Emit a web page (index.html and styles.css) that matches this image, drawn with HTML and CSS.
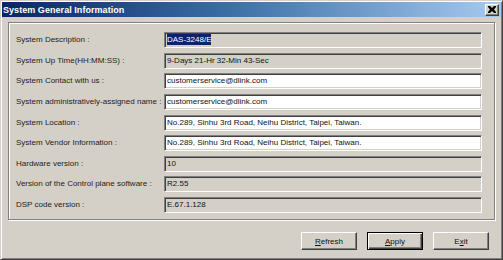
FILE: index.html
```html
<!DOCTYPE html>
<html>
<head>
<meta charset="utf-8">
<link rel="stylesheet" href="styles.css">
</head>
<body>
<div class="window">
  <div class="titlebar">
    <span class="title">System General Information</span>
    <span class="close"><svg width="8" height="7" viewBox="0 0 8 7"><path d="M0 0h2l2 2 2-2h2v1L6 3.5 8 6v1H6L4 5 2 7H0V6l2-2.5L0 1z" fill="#000"/></svg></span>
  </div>
  <div class="group">
    <div class="label">System Description :</div>
    <div class="field ro"><span class="sel">DAS-3248/E</span></div>
    <div class="label">System Up Time(HH:MM:SS) :</div>
    <div class="field ro">9-Days 21-Hr 32-Min 43-Sec</div>
    <div class="label">System Contact with us :</div>
    <div class="field">customerservice@dlink.com</div>
    <div class="label">System administratively-assigned name :</div>
    <div class="field">customerservice@dlink.com</div>
    <div class="label">System Location :</div>
    <div class="field">No.289, Sinhu 3rd Road, Neihu District, Taipei, Taiwan.</div>
    <div class="label">System Vendor Information :</div>
    <div class="field">No.289, Sinhu 3rd Road, Neihu District, Taipei, Taiwan.</div>
    <div class="label">Hardware version :</div>
    <div class="field ro">10</div>
    <div class="label">Version of the Control plane software :</div>
    <div class="field ro">R2.55</div>
    <div class="label">DSP code version :</div>
    <div class="field ro">E.67.1.128</div>
  </div>
  <div class="buttons">
    <div class="btn"><span><u>R</u>efresh</span></div>
    <div class="btn default"><span><u>A</u>pply</span></div>
    <div class="btn"><span>E<u>x</u>it</span></div>
  </div>
</div>
</body>
</html>
```
FILE: styles.css
```css
html, body {
  margin: 0;
  padding: 0;
  background: #d4d0c8;
}
.window {
  width: 503px;
  height: 260px;
  box-sizing: border-box;
  background: #d4d0c8;
  border: 1px solid;
  border-color: #d4d0c8 #404040 #404040 #d4d0c8;
  box-shadow: inset 1px 1px #ffffff, inset -1px -1px #808080;
  padding: 1px;
  font-family: "Liberation Sans", Arial, sans-serif;
  display: flex;
  flex-direction: column;
}
.titlebar {
  height: 15px;
  background: linear-gradient(to right, #0a246a 0%, #3a6ea5 45%, #a6caf0 100%);
  display: flex;
  align-items: center;
  justify-content: space-between;
  padding: 0 2px 0 1px;
}
.title {
  color: #fff;
  font-weight: bold;
  font-size: 9px;
  letter-spacing: 0.05px;
}
.close {
  width: 14px;
  height: 12px;
  box-sizing: border-box;
  background: #d4d0c8;
  border: 1px solid;
  border-color: #fff #404040 #404040 #fff;
  box-shadow: inset -1px -1px #808080;
  display: flex;
  align-items: center;
  justify-content: center;
  padding-right: 1px;
}
.close svg { display: block; }
.group {
  margin: 5px 6px 0 6px;
  height: 198px;
  box-sizing: border-box;
  border: 1px solid #808080;
  box-shadow: inset 1px 1px #fff, 1px 1px #fff;
  padding: 9px 10px 0 7px;
  display: grid;
  grid-template-columns: 148px 318px;
  grid-auto-rows: 16px;
  row-gap: 4.625px;
  align-items: center;
}
.label {
  font-size: 8px;
  color: #1c1c1c;
  white-space: nowrap;
  line-height: 16px;
}
.field {
  height: 16px;
  box-sizing: border-box;
  background: #fff;
  border: 1px solid;
  border-color: #808080 #fff #fff #808080;
  box-shadow: inset 1px 1px #404040, inset -1px -1px #d4d0c8;
  font-size: 8px;
  line-height: 14px;
  padding: 0 2px;
  white-space: nowrap;
  overflow: hidden;
  color: #111;
}
.field.ro {
  background: #d4d0c8;
}
.sel {
  background: #0a246a;
  color: #fff;
  padding: 1px 0;
}
.buttons {
  display: flex;
  justify-content: flex-end;
  gap: 10px;
  margin: 12px 12px 0 0;
}
.btn {
  width: 56px;
  height: 18px;
  box-sizing: border-box;
  border: 1px solid;
  border-color: #fff #404040 #404040 #fff;
  box-shadow: inset -1px -1px #808080;
  font-size: 8px;
  color: #111;
  display: flex;
  align-items: center;
  justify-content: center;
}
.btn.default {
  border: 1px solid #000;
  box-shadow: inset 1px 1px #fff, inset -1px -1px #404040, inset -2px -2px #808080;
}
```
